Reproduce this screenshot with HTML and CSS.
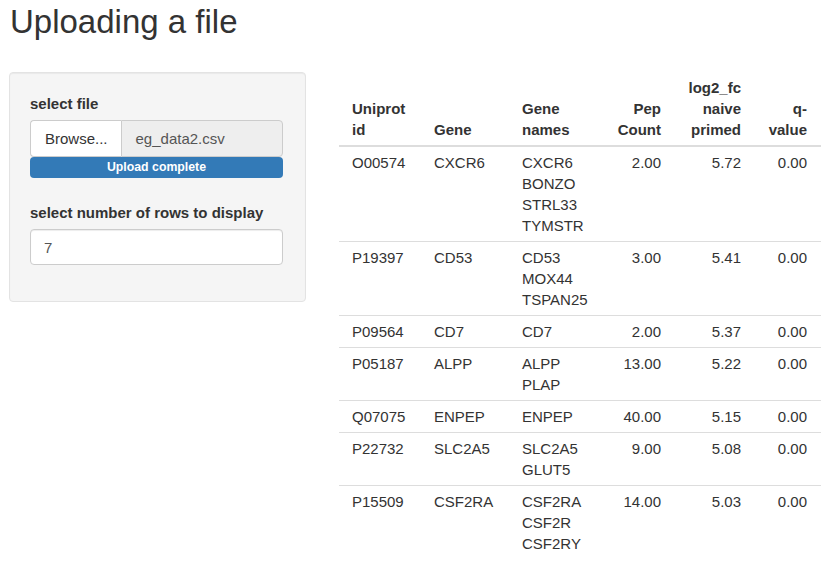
FILE: index.html
```html
<!DOCTYPE html>
<html lang="en">
<head>
<meta charset="UTF-8">
<meta name="viewport" content="width=device-width, initial-scale=1.0">
<title>Uploading a file</title>
<link rel="stylesheet" href="styles.css">
</head>
<body>
<h2 class="title">Uploading a file</h2>

<div class="row">
<div class="well">
<div class="form-group file-group">
<label class="control-label">select file</label>
<div class="input-group">
<span class="btn-file">Browse...</span>
<span class="file-name">eg_data2.csv</span>
</div>
<div class="progress"><div class="progress-bar">Upload complete</div></div>
</div>
<div class="form-group">
<label class="control-label">select number of rows to display</label>
<div class="form-control">7</div>
</div>
</div>

<div class="main">
<table class="shiny-table">
<colgroup><col class="c1"><col class="c2"><col class="c3"><col class="c4"><col class="c5"><col class="c6"></colgroup>
<thead>
<tr><th>Uniprot id</th><th>Gene</th><th>Gene names</th><th class="num">Pep Count</th><th class="num">log2_fc naive primed</th><th class="num">q-value</th></tr>
</thead>
<tbody>
<tr><td>O00574</td><td>CXCR6</td><td>CXCR6<br>BONZO<br>STRL33<br>TYMSTR</td><td class="num">2.00</td><td class="num">5.72</td><td class="num">0.00</td></tr>
<tr><td>P19397</td><td>CD53</td><td>CD53<br>MOX44<br>TSPAN25</td><td class="num">3.00</td><td class="num">5.41</td><td class="num">0.00</td></tr>
<tr><td>P09564</td><td>CD7</td><td>CD7</td><td class="num">2.00</td><td class="num">5.37</td><td class="num">0.00</td></tr>
<tr><td>P05187</td><td>ALPP</td><td>ALPP<br>PLAP</td><td class="num">13.00</td><td class="num">5.22</td><td class="num">0.00</td></tr>
<tr><td>Q07075</td><td>ENPEP</td><td>ENPEP</td><td class="num">40.00</td><td class="num">5.15</td><td class="num">0.00</td></tr>
<tr><td>P22732</td><td>SLC2A5</td><td>SLC2A5<br>GLUT5</td><td class="num">9.00</td><td class="num">5.08</td><td class="num">0.00</td></tr>
<tr><td>P15509</td><td>CSF2RA</td><td>CSF2RA<br>CSF2R<br>CSF2RY</td><td class="num">14.00</td><td class="num">5.03</td><td class="num">0.00</td></tr>
</tbody>
</table>
</div>
</div>
</body>
</html>
```

FILE: styles.css
```css
*{box-sizing:border-box;}
body{margin:0;padding-top:4px;font-family:"Liberation Sans",Arial,sans-serif;font-size:15px;line-height:21px;color:#333;background:#fff;}
.title{margin:0 0 32px 10px;font-size:33px;line-height:36px;font-weight:normal;color:#333;}
.row{display:flex;align-items:flex-start;}
.well{margin-left:9px;width:297px;padding:20px 22px 20px 20px;background-color:#f5f5f5;border:1px solid #e3e3e3;border-radius:4px;box-shadow:inset 0 1px 1px rgba(0,0,0,0.05);}
.form-group{margin-bottom:16px;}
.form-group.file-group{margin-bottom:24px;}
.control-label{display:block;font-weight:bold;margin-bottom:6px;}
.input-group{display:flex;height:37px;}
.btn-file{display:flex;align-items:center;padding:0 13px 0 14px;background:#fff;border:1px solid #ccc;border-right:0;border-radius:4px 0 0 4px;color:#333;}
.file-name{flex:1;display:flex;align-items:center;padding:0 14px;background:#eee;border:1px solid #ccc;border-radius:0 4px 4px 0;color:#555;}
.progress{height:21px;background:#f5f5f5;border-radius:4px;overflow:hidden;}
.progress-bar{height:100%;background-color:#337ab7;color:#fff;font-size:12.3px;font-weight:bold;line-height:21px;text-align:center;}
.form-control{height:36px;padding:0 13px;display:flex;align-items:center;background:#fff;border:1px solid #ccc;border-radius:4px;color:#555;box-shadow:inset 0 1px 1px rgba(0,0,0,0.075);}
.main{margin-left:33px;flex:1;}
.shiny-table{border-collapse:collapse;table-layout:fixed;width:482px;}
.c1{width:82px;}.c2{width:88px;}.c3{width:92px;}.c4{width:73px;}.c5{width:80px;}.c6{width:67px;}
.shiny-table th,.shiny-table td{padding:5px 13px;text-align:left;}
.shiny-table th{font-weight:bold;vertical-align:bottom;border-bottom:2px solid #ddd;}
.shiny-table td{vertical-align:top;border-top:1px solid #ddd;}
.shiny-table tbody tr:first-child td{border-top:0;}
.shiny-table .num{text-align:right;}
.shiny-table th:last-child,.shiny-table td:last-child{padding-right:14px;}
```
